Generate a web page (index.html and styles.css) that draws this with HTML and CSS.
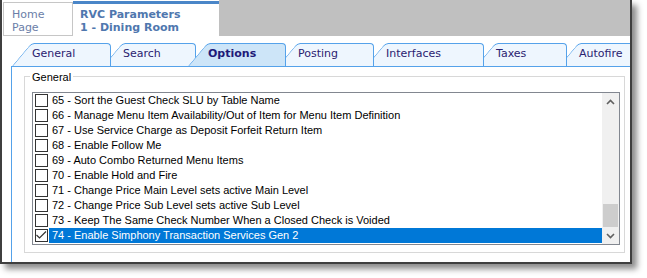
FILE: index.html
```html
<!DOCTYPE html>
<html lang="en">
<head>
  <meta charset="UTF-8">
  <title>RVC Parameters - Options</title>
  <link rel="stylesheet" href="styles.css">
</head>
<body>

<div class="window">

  <!-- page tabs -->
  <div class="header">
    <div class="page-tab home-tab">Home<br>Page</div>
    <div class="page-tab rvc-tab">RVC Parameters<br>1 - Dining Room</div>
    <div class="header-fill"></div>
  </div>

  <!-- option tabs -->
  <div class="tabs">
    <div class="tab">General</div>
    <div class="tab">Search</div>
    <div class="tab active">Options</div>
    <div class="tab">Posting</div>
    <div class="tab">Interfaces</div>
    <div class="tab">Taxes</div>
    <div class="tab">Autofire</div>
  </div>

  <div class="panel">
    <div class="group">
      <span class="group-label">General</span>
      <div class="listbox">
        <ul class="items">
          <li class="item"><span class="check"></span><span class="item-text">65 - Sort the Guest Check SLU by Table Name</span></li>
          <li class="item"><span class="check"></span><span class="item-text">66 - Manage Menu Item Availability/Out of Item for Menu Item Definition</span></li>
          <li class="item"><span class="check"></span><span class="item-text">67 - Use Service Charge as Deposit Forfeit Return Item</span></li>
          <li class="item"><span class="check"></span><span class="item-text">68 - Enable Follow Me</span></li>
          <li class="item"><span class="check"></span><span class="item-text">69 - Auto Combo Returned Menu Items</span></li>
          <li class="item"><span class="check"></span><span class="item-text">70 - Enable Hold and Fire</span></li>
          <li class="item"><span class="check"></span><span class="item-text">71 - Change Price Main Level sets active Main Level</span></li>
          <li class="item"><span class="check"></span><span class="item-text">72 - Change Price Sub Level sets active Sub Level</span></li>
          <li class="item"><span class="check"></span><span class="item-text">73 - Keep The Same Check Number When a Closed Check is Voided</span></li>
          <li class="item selected">
            <span class="check">
              <svg width="11" height="11" viewBox="0 0 11 11"><polyline points="0.5,5 3.5,8 10,1.5" fill="none" stroke="#333" stroke-width="1.2"/></svg>
            </span>
            <span class="item-text">74 - Enable Simphony Transaction Services Gen 2</span>
          </li>
        </ul>
        <div class="scrollbar">
          <div class="scroll-btn">
            <svg width="9" height="6" viewBox="0 0 9 6"><polyline points="1,5 4.5,1.5 8,5" fill="none" stroke="#606060" stroke-width="1.6"/></svg>
          </div>
          <div class="scroll-track"><div class="scroll-thumb"></div></div>
          <div class="scroll-btn">
            <svg width="9" height="6" viewBox="0 0 9 6"><polyline points="1,1 4.5,4.5 8,1" fill="none" stroke="#606060" stroke-width="1.6"/></svg>
          </div>
        </div>
      </div>
    </div>
  </div>

</div>

</body>
</html>
```

FILE: styles.css
```css
* { box-sizing: border-box; margin: 0; padding: 0; }

body {
  background: #fff;
  width: 647px;
  height: 278px;
  overflow: hidden;
}

.window {
  display: flex;
  flex-direction: column;
  width: 632px;
  height: 264px;
  border: 2px solid #3f3f3f;
  border-top: 0;
  background: #fff;
  box-shadow: 5px 5px 6px rgba(0,0,0,0.45);
  overflow: hidden;
}

/* header with page tabs */
.header {
  display: flex;
  height: 36px;
  flex-shrink: 0;
  font-family: "DejaVu Sans", Verdana, sans-serif;
  font-size: 11px;
  line-height: 13px;
}

.page-tab {
  background: #fff;
}

.home-tab {
  width: 70px;
  height: 34px;
  margin: 2px 0 0 1px;
  padding: 5px 0 0 8px;
  border: 1px solid #c6c6c6;
  color: #6b7ea8;
}

.rvc-tab {
  width: 146px;
  height: 35px;
  margin-top: 1px;
  padding: 4px 0 0 7px;
  border-top: 3px solid #4a86c8;
  color: #4f77ae;
  font-weight: bold;
}

.header-fill {
  flex: 1;
  background: #c0c0c0;
}

/* option tabs */
.tabs {
  display: flex;
  height: 30px;
  flex-shrink: 0;
  padding: 7px 0 0 10px;
}

.tab {
  position: relative;
  z-index: 1;
  flex-shrink: 0;
  height: 23px;
  margin-left: -8px;
  padding-left: 20px;
  font-family: "DejaVu Sans", Verdana, sans-serif;
  font-size: 11px;
  line-height: 21px;
  color: #2a2270;
}

.tab:first-child { margin-left: 0; }

/* slanted left edge */
.tab::before {
  content: "";
  position: absolute;
  left: 0; top: 0; bottom: 0;
  width: 30px;
  background: #eef6fe;
  border-left: 1px solid #55a2ea;
  border-top: 1px solid #55a2ea;
  border-top-left-radius: 4px;
  transform: skewX(-40deg);
  transform-origin: bottom left;
  z-index: -1;
}

/* body of the tab */
.tab::after {
  content: "";
  position: absolute;
  left: 22px; top: 0; right: 0; bottom: 0;
  background: #eef6fe;
  border-top: 1px solid #55a2ea;
  border-right: 1px solid #55a2ea;
  border-top-right-radius: 4px;
  z-index: -1;
}

.tab.active { font-weight: bold; color: #1e1a78; }
.tab.active::before,
.tab.active::after { background: #cde5f8; }

.tab:nth-child(1) { width: 99px;  z-index: 7; }
.tab:nth-child(2) { width: 93px;  z-index: 6; }
.tab:nth-child(3) { width: 98px;  z-index: 10; }
.tab:nth-child(4) { width: 96px;  z-index: 4; }
.tab:nth-child(5) { width: 118px; z-index: 3; }
.tab:nth-child(6) { width: 91px;  z-index: 2; }
.tab:nth-child(7) { width: 90px;  z-index: 1; }

/* content panel */
.panel {
  flex: 1;
  margin-left: 9px;
  border-top: 1px solid #55a2ea;
  border-left: 1px solid #55a2ea;
  background: #fff;
  padding: 9px 5px 0 12px;
}

.group {
  position: relative;
  border: 1px solid #d8d8d8;
  padding: 15px 4px 7px 7px;
}

.group-label {
  position: absolute;
  top: -6px;
  left: 5px;
  padding: 0 2px;
  background: #fff;
  font-family: "Liberation Sans", Arial, sans-serif;
  font-size: 11px;
  line-height: 13px;
  color: #000;
}

.listbox {
  display: flex;
  height: 153px;
  border: 1px solid #828790;
  background: #fff;
}

.items {
  flex: 1;
  list-style: none;
  font-family: "Liberation Sans", Arial, sans-serif;
  font-size: 11px;
  line-height: 15px;
  color: #000;
}

.item {
  display: flex;
  height: 15px;
  padding-left: 2px;
}

.check {
  width: 13px;
  height: 13px;
  margin: 1px 1px 0 0;
  border: 1px solid #333;
  background: #fff;
  flex-shrink: 0;
}

.check svg { display: block; }

.item-text {
  flex: 1;
  padding-left: 3px;
  white-space: nowrap;
}

.item.selected .item-text {
  background: #0078d7;
  color: #fff;
}

/* scrollbar */
.scrollbar {
  display: flex;
  flex-direction: column;
  width: 17px;
  background: #f0f0f0;
}

.scroll-btn {
  height: 17px;
  display: flex;
  align-items: center;
  justify-content: center;
}

.scroll-track {
  flex: 1;
  display: flex;
  flex-direction: column;
  justify-content: flex-end;
  padding: 0 1px;
}

.scroll-thumb {
  height: 23px;
  background: #cdcdcd;
}
```
